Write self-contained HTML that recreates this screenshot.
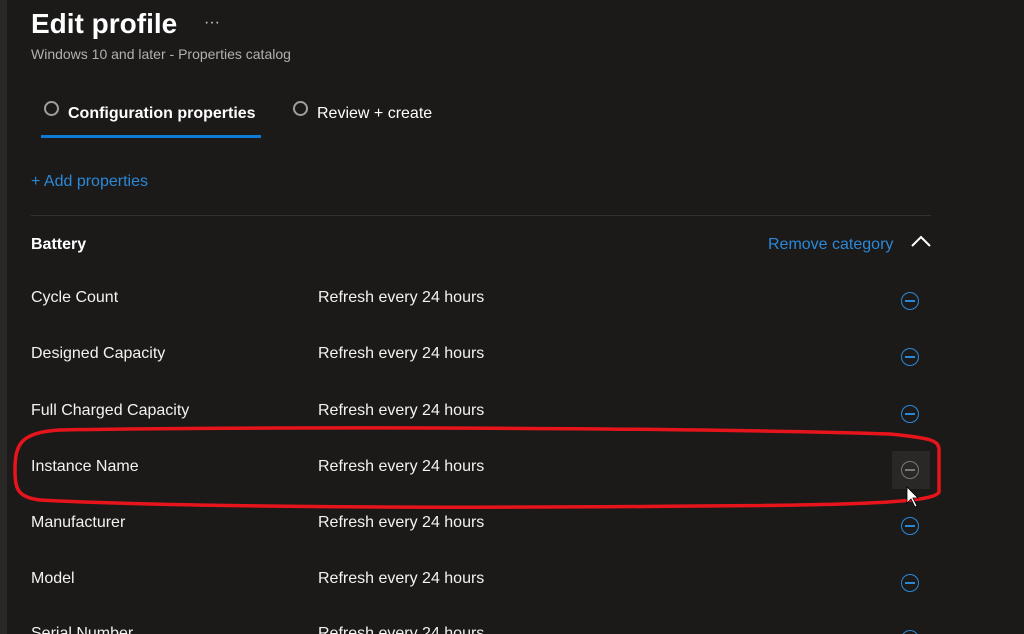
<!DOCTYPE html>
<html style="width:1024px;height:634px;overflow:hidden"><head><style>
body{margin:0;width:1024px;height:634px;overflow:hidden;background:#1b1a19;font-family:"Liberation Sans",sans-serif;color:#fff;position:relative}
.strip{position:absolute;left:0;top:0;width:7px;height:634px;background:#292827}
.a{position:absolute;white-space:nowrap}
.row{position:absolute;left:31px;font-size:16px;color:#f3f2f1}
.val{position:absolute;left:318px;font-size:16px;color:#f3f2f1;white-space:nowrap}
.ic{position:absolute;left:901px;width:16px;height:16px;border:1.5px solid #2b88d8;border-radius:50%}
.ic:after{content:"";position:absolute;left:3px;right:3px;top:7px;height:1.5px;background:#2b88d8}
.g{border-color:#797775}.g:after{background:#797775}
</style></head><body>
<div class="strip"></div>
<div class="a" style="left:31px;top:8px;font-size:28px;font-weight:bold">Edit profile</div>
<div class="a" style="left:204px;top:14px;font-size:16px;color:#ccc">···</div>
<div class="a" style="left:31px;top:46px;font-size:14px;color:#b3b0ad">Windows 10 and later - Properties catalog</div>
<div class="a" style="left:44px;top:101px;width:15px;height:15px;border:2px solid #a19f9d;border-radius:50%;box-sizing:border-box"></div>
<div class="a" style="left:68px;top:105px;font-size:16px;font-weight:bold">Configuration properties</div>
<div class="a" style="left:41px;top:135px;width:220px;height:3px;background:#0f7bd8"></div>
<div class="a" style="left:293px;top:101px;width:15px;height:15px;border:2px solid #a19f9d;border-radius:50%;box-sizing:border-box"></div>
<div class="a" style="left:317px;top:105px;font-size:16px">Review + create</div>
<div class="a" style="left:31px;top:173px;font-size:16px;color:#2b88d8">+ Add properties</div>
<div class="a" style="left:31px;top:215px;width:900px;height:1px;background:#323130"></div>
<div class="a" style="left:31px;top:236px;font-size:16px;font-weight:bold">Battery</div>
<div class="a" style="left:768px;top:236px;font-size:16px;color:#2b88d8">Remove category</div>
<svg class="a" style="left:910px;top:234px" width="22" height="14"><path d="M2 12 L11 3 L20 12" stroke="#fff" stroke-width="2" fill="none"/></svg>

<div class="row" style="top:289px">Cycle Count</div><div class="val" style="top:289px">Refresh every 24 hours</div><div class="ic" style="top:292px"></div>
<div class="row" style="top:345px">Designed Capacity</div><div class="val" style="top:345px">Refresh every 24 hours</div><div class="ic" style="top:348px"></div>
<div class="row" style="top:402px">Full Charged Capacity</div><div class="val" style="top:402px">Refresh every 24 hours</div><div class="ic" style="top:405px"></div>
<div class="a" style="left:892px;top:451px;width:38px;height:38px;background:#292827"></div>
<div class="row" style="top:458px">Instance Name</div><div class="val" style="top:458px">Refresh every 24 hours</div><div class="ic g" style="top:461px"></div>
<div class="row" style="top:514px">Manufacturer</div><div class="val" style="top:514px">Refresh every 24 hours</div><div class="ic" style="top:517px"></div>
<div class="row" style="top:570px">Model</div><div class="val" style="top:570px">Refresh every 24 hours</div><div class="ic" style="top:574px"></div>
<div class="row" style="top:625px">Serial Number</div><div class="val" style="top:625px">Refresh every 24 hours</div><div class="ic" style="top:630px"></div>
<svg class="a" style="left:0;top:0" width="1024" height="634"><path d="M60 430 C300 426 700 428 890 434 C930 438 939 440 939 450 L939 492 C935 500 900 505 700 506 C400 509 150 506 40 500 C18 497 15 490 15 470 C15 445 20 432 60 430 Z" stroke="#e8141c" stroke-width="3.5" fill="none"/>
<path d="M907 487 L907 503 L911 499 L915 507 L917 506 L913 498 L918 498 Z" fill="#fff" stroke="#000" stroke-width="0.8"/></svg>
</body></html>
